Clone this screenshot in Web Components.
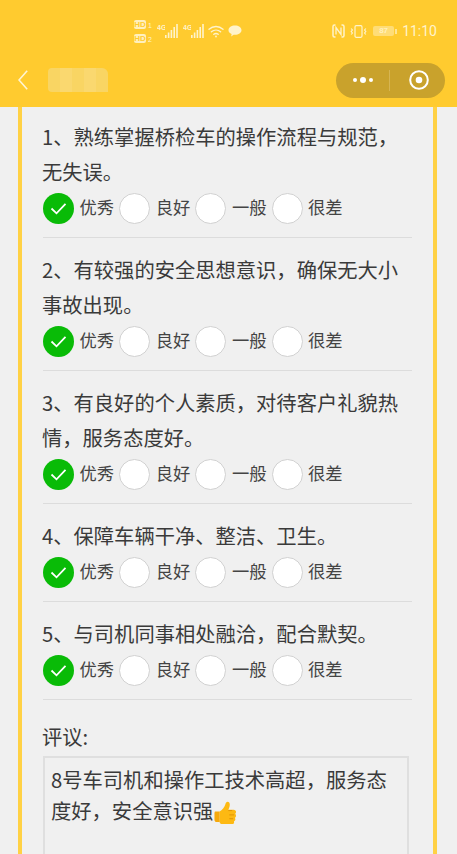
<!DOCTYPE html>
<html lang="zh">
<head>
<meta charset="utf-8">
<title>评价</title>
<style>
  html, body { margin: 0; height: 854px; overflow: hidden; background: #f0f0f0; }
  body { font-family: "Noto Sans CJK SC", "Noto Sans", sans-serif; color: #333; }
</style>
</head>
<body>
<app-status-bar></app-status-bar>
<app-nav-bar></app-nav-bar>
<survey-card>
  <survey-question>1、熟练掌握桥检车的操作流程与规范，无失误。</survey-question>
  <survey-question>2、有较强的安全思想意识，确保无大小事故出现。</survey-question>
  <survey-question>3、有良好的个人素质，对待客户礼貌热情，服务态度好。</survey-question>
  <survey-question>4、保障车辆干净、整洁、卫生。</survey-question>
  <survey-question>5、与司机同事相处融洽，配合默契。</survey-question>
  <comment-box label="评议:">8号车司机和操作工技术高超，服务态度好，安全意识强</comment-box>
</survey-card>

<script>
class AppStatusBar extends HTMLElement {
  constructor() {
    super();
    const bars = `
      <rect x="0" y="11" width="1.600" height="3"/><rect x="2.800" y="8.500" width="1.600" height="5.500"/>
      <rect x="5.600" y="6" width="1.600" height="8"/><rect x="8.400" y="3" width="1.600" height="11"/>
      <rect x="11.200" y="0" width="1.600" height="14"/>`;
    const hd = (n) => `<div class="hd"><b>HD</b><i>${n}</i></div>`;
    const net = `<div class="net"><span>4G</span><svg width="13" height="14" fill="currentColor">${bars}</svg></div>`;
    this.attachShadow({ mode: "open" }).innerHTML = `
      <style>
        :host { display: flex; height: 62px; box-sizing: border-box; padding: 0 20px 0 134px;
          align-items: center; justify-content: space-between; background: #ffcb2f; color: #fff3cb; }
        .left, .right { display: flex; align-items: center; }
        .stack { display: flex; flex-direction: column; gap: 5px; margin-right: 4px; width: 19px; }
        .hd { display: flex; align-items: flex-end; gap: 2px; height: 9px; }
        b { font: 700 8px/9px "Liberation Sans", sans-serif; background: #fff0bd; color: #ffcb2f;
          border-radius: 2px; width: 12px; text-align: center; }
        i { font: 400 7px/7px "Liberation Sans", sans-serif; width: 5px; }
        .net { display: flex; align-items: flex-start; width: 21px; height: 14px; margin-right: 5px; }
        .net span { font: 700 7px/7px "Liberation Sans", sans-serif; width: 8px; white-space: nowrap; overflow: hidden; }
        .wifi { margin: 0 4px 0 -1px; }
        .nfc { margin-right: 5px; }
        .vib { margin-right: 6px; }
        .bat { display: flex; align-items: center; margin-right: 5px; }
        .bat span { font: 700 8px/10px "Liberation Sans", sans-serif; width: 21px; height: 10px; border-radius: 2px;
          background: #ffdd77; color: #fff0bd; text-align: center; }
        .bat u { width: 2px; height: 5px; background: #ffe593; margin-left: 1px; }
        .time { font: 400 14px/16px "Roboto", sans-serif; }
      </style>
      <div class="left">
        <div class="stack">${hd(1)}${hd(2)}</div>
        ${net}${net}
        <svg class="wifi" width="16" height="13" viewBox="0 0 16 13" fill="none" stroke="currentColor" stroke-width="1.400" stroke-linecap="round">
          <path d="M1 4.200C5 .6 11 .6 15 4.200M3.400 6.800c2.700-2.300 6.500-2.300 9.200 0M5.800 9.300c1.400-1.100 3-1.100 4.400 0"/>
          <circle cx="8" cy="11.500" r=".9" fill="currentColor" stroke="none"/>
        </svg>
        <svg width="14" height="12" viewBox="0 0 14 12" fill="currentColor">
          <path d="M7 .5c3.600 0 6.500 2.100 6.500 4.700S10.600 9.800 7 9.800H5.600L3.200 11.500l.4-2.500C1.700 8.200.5 6.800.5 5.200.5 2.600 3.400.5 7 .5z"/>
        </svg>
      </div>
      <div class="right">
        <svg class="nfc" width="13" height="14" viewBox="0 0 13 14" fill="none" stroke="currentColor" stroke-width="1.500">
          <path d="M3.500 1H2.500Q1 1 1 2.500v9Q1 13 2.500 13h1M9.500 1h1Q12 1 12 2.500v9Q12 13 10.500 13h-1"/><path d="M4 10.500V3.500l5 7V3.500" stroke-width="1.300"/>
        </svg>
        <svg class="vib" width="17" height="13" viewBox="0 0 17 13" fill="none" stroke="currentColor" stroke-width="1.200">
          <rect x="5" y=".7" width="7" height="11.600" rx="1.200"/><path d="M1.200 3.500l1.200 1.500-1.200 1.500 1.200 1.500-1.200 1.500M15.800 3.500l-1.200 1.500 1.200 1.500-1.200 1.500 1.200 1.500"/>
        </svg>
        <div class="bat"><span>87</span><u></u></div>
        <span class="time">11:10</span>
      </div>`;
  }
}

class AppNavBar extends HTMLElement {
  constructor() {
    super();
    this.attachShadow({ mode: "open" }).innerHTML = `
      <style>
        :host { display: flex; height: 45px; box-sizing: border-box; padding: 0 12px 9px 18px;
          align-items: center; background: #ffcb2f; }
        .back { display: block; margin-right: 20px; }
        .title { width: 60px; height: 24px; border-radius: 4px 6px 0 4px; flex: none;
          background: repeating-linear-gradient(90deg, #f9d563 0 12px, #fad86f 12px 24px); }
        .capsule { margin-left: auto; width: 109px; height: 35px; border-radius: 18px; background: #c9a22c;
          display: flex; align-items: center; }
        .more { flex: 1; display: flex; align-items: center; justify-content: center; gap: 3px; }
        .more span { width: 4px; height: 4px; border-radius: 50%; background: #fff; }
        .more span:nth-child(2) { width: 6px; height: 6px; }
        .line { width: 1px; height: 21px; background: #d6b552; }
        .close { flex: 1; display: flex; align-items: center; justify-content: center; padding-left: 2px; }
      </style>
      <svg class="back" width="10" height="20" viewBox="0 0 10 20" fill="none" stroke="#fff4d4" stroke-width="1.600">
        <path d="M9.200 .8L1 10l8.200 9.200"/>
      </svg>
      <div class="title"></div>
      <div class="capsule">
        <div class="more"><span></span><span></span><span></span></div>
        <div class="line"></div>
        <div class="close">
          <svg width="20" height="20" viewBox="0 0 20 20">
            <circle cx="10" cy="10" r="8.800" fill="none" stroke="#fff" stroke-width="2"/>
            <circle cx="10" cy="10" r="3.300" fill="#fff"/>
          </svg>
        </div>
      </div>`;
  }
}

class SurveyCard extends HTMLElement {
  constructor() {
    super();
    this.attachShadow({ mode: "open" }).innerHTML = `
      <style>
        :host { display: block; box-sizing: border-box; margin: 0 20px 0 18px; height: 747px; padding: 12px 21px 0;
          border: solid #ffd145; border-width: 0 4px; background: #f0f0f0; overflow: hidden; }
      </style>
      <slot></slot>`;
  }
}

class SurveyQuestion extends HTMLElement {
  constructor() {
    super();
    this.attachShadow({ mode: "open" }).innerHTML = `
      <style>
        :host { display: block; padding-bottom: 13px; margin-bottom: 14px; border-bottom: 1px solid #dcdcdc; }
        .text { font-size: 20.300px; line-height: 35px; color: #3a3a3a; margin-left: -1px; }
        .rates { display: flex; margin-top: 4px; }
      </style>
      <div class="text"><slot></slot></div>
      <div class="rates">
        <rating-option checked>优秀</rating-option>
        <rating-option>良好</rating-option>
        <rating-option>一般</rating-option>
        <rating-option>很差</rating-option>
      </div>`;
  }
}

class RatingOption extends HTMLElement {
  constructor() {
    super();
    const on = this.hasAttribute("checked");
    this.attachShadow({ mode: "open" }).innerHTML = `
      <style>
        :host { display: flex; align-items: center; width: 76.200px; height: 31px; flex: none; }
        .dot { width: 31px; height: 31px; box-sizing: border-box; border-radius: 50%; flex: none;
          background: ${on ? "#09bb07" : "#fff"}; border: ${on ? "0" : "1px solid #d1d1d1"};
          display: flex; align-items: center; justify-content: center; }
        .label { margin-left: 5.500px; padding-bottom: 4px; font-size: 17.300px; line-height: 24px; color: #444; white-space: nowrap; }
      </style>
      <div class="dot">${on ? `<svg width="17" height="13" viewBox="0 0 17 13" fill="none" stroke="#fff" stroke-width="1.800"><path d="M1.500 6.500l5 4.800L15.500 1.800"/></svg>` : ""}</div>
      <div class="label"><slot></slot></div>`;
  }
}

class CommentBox extends HTMLElement {
  constructor() {
    super();
    this.attachShadow({ mode: "open" }).innerHTML = `
      <style>
        :host { display: block; padding-top: 5px; }
        .label { font-size: 20.300px; line-height: 35px; color: #3a3a3a; margin-left: -1px; }
        .box { margin-top: 2px; width: 366px; height: 200px; box-sizing: border-box; padding: 6px 16px 0 6px;
          border: 2px solid #dfdfdf; font-size: 20.300px; line-height: 31px; color: #3a3a3a; }
        svg { vertical-align: -5px; }
      </style>
      <div class="label">${this.getAttribute("label")}</div>
      <div class="box"><slot></slot><svg width="24" height="23" viewBox="0 0 25 24">
        <path fill="#f5a90d" d="M2 11h5v11H4c-1.500 0-2.500-1-2.500-2.500V12.500z"/>
        <path fill="#fdb913" d="M7 11c3-2 5-5 6-8 .4-1.300 1-2.300 2.200-2.300 1.500 0 2.300 1.300 2.300 3 0 2-.7 3.800-1.500 5.300h5.500c1.500 0 2.500 1 2.500 2.400 0 .9-.4 1.600-1 2 .6.500 1 1.200 1 2 0 1-.5 1.700-1.200 2.100.3.400.5 1 .5 1.600 0 1-.6 1.800-1.500 2.100.1.300.2.600.2.900 0 1.300-1 2.400-2.500 2.400H11c-1.700 0-3-.6-4-1.500z"/>
        <path fill="none" stroke="#d98a00" stroke-width=".8" d="M16 10h4M17 14.500h5M17 18.500h4"/>
      </svg></div>`;
  }
}

customElements.define("app-status-bar", AppStatusBar);
customElements.define("app-nav-bar", AppNavBar);
customElements.define("survey-card", SurveyCard);
customElements.define("survey-question", SurveyQuestion);
customElements.define("rating-option", RatingOption);
customElements.define("comment-box", CommentBox);
</script>
</body>
</html>
